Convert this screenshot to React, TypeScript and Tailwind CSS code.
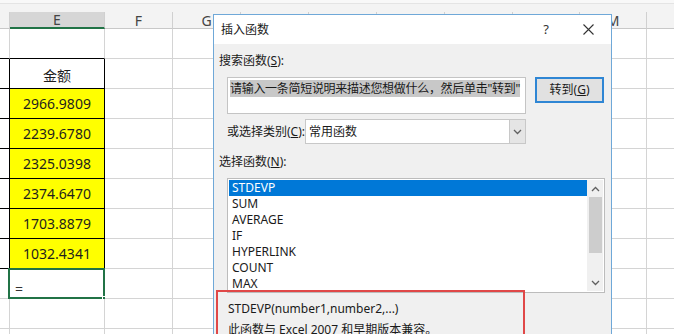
import React from 'react';

// ダイアログに隠れる列見出しは空にしておく
const COLS = [
  { key: 'D', w: 'w-[10px]', label: '' },
  { key: 'E', w: 'w-[95px]', label: 'E' },
  { key: 'F', w: 'w-[68px]', label: 'F' },
  { key: 'G', w: 'w-[68px]', label: 'G' },
  { key: 'H', w: 'w-[68px]', label: '' },
  { key: 'I', w: 'w-[68px]', label: '' },
  { key: 'J', w: 'w-[68px]', label: '' },
  { key: 'K', w: 'w-[68px]', label: '' },
  { key: 'L', w: 'w-[67px]', label: '' },
  { key: 'M', w: 'w-[67px]', label: 'M' },
  { key: 'N', w: 'w-[68px]', label: '' },
];

const AMOUNTS = ['2966.9809', '2239.6780', '2325.0398', '2374.6470', '1703.8879', '1032.4341'];

const FUNCS = ['STDEVP', 'SUM', 'AVERAGE', 'IF', 'HYPERLINK', 'COUNT', 'MAX'];

// 表のセル（罫線つき）
const Cell: React.FC<{ row: number; col: number }> = ({ row, col }) => {
  const inTable = col <= 1 && row <= 7;
  const bottom = inTable ? 'border-b-black' : 'border-b-[#d4d4d4]';
  const right = col <= 1 && row >= 1 && row <= 7 ? 'border-r-black' : 'border-r-[#d4d4d4]';
  const yellow = col === 1 && row >= 2 && row <= 7;
  const w = COLS[col].w;

  let content: React.ReactNode = null;
  if (col === 1 && row === 1) content = <span className="pt-[3px]">金额</span>;
  if (yellow) content = AMOUNTS[row - 2];

  return (
    <div
      className={`relative shrink-0 h-[30px] border-b border-r ${w} ${bottom} ${right} ${
        yellow ? 'bg-[#ffff00]' : 'bg-white'
      } flex items-center justify-center text-[14px] text-[#1e1e1e]`}
    >
      {content}
      {col === 1 && row === 8 && (
        <>
          <div className="absolute -top-px -left-[2px] -right-px -bottom-px border-2 border-[#217346]" />
          <span className="absolute left-[5px] bottom-[2px] text-[14px] leading-none text-[#333]">=</span>
          <div className="absolute -right-[3px] -bottom-[3px] w-[5px] h-[5px] bg-[#217346] border border-white" />
        </>
      )}
    </div>
  );
};

const Sheet: React.FC = () => (
  <div className="flex flex-col">
    <div className="h-[4px] bg-[#f8f8f8] border-b border-[#e4e4e4]" />
    <div className="h-[8px] bg-[#f3f3f3]" />
    <div className="flex h-[17px] bg-[#f3f3f3]">
      {COLS.map((c) => (
        <div
          key={c.key}
          className={`shrink-0 ${c.w} border-r border-[#d0d0d0] flex items-center justify-center text-[14px] text-[#444] ${
            c.key === 'E' ? 'bg-[#d6d6d6] border-b-2 border-b-[#217346]' : 'border-b border-b-[#c8c8c8]'
          }`}
        >
          {c.label}
        </div>
      ))}
    </div>
    {Array.from({ length: 11 }).map((_, r) => (
      <div key={r} className="flex">
        {COLS.map((c, ci) => (
          <Cell key={c.key} row={r} col={ci} />
        ))}
      </div>
    ))}
  </div>
);

const Chevron: React.FC<{ up?: boolean; className?: string }> = ({ up, className }) => (
  <svg width="9" height="6" viewBox="0 0 9 6" className={className}>
    <path
      d={up ? 'M1 5 L4.5 1.5 L8 5' : 'M1 1 L4.5 4.5 L8 1'}
      fill="none"
      stroke="currentColor"
      strokeWidth="1.3"
    />
  </svg>
);

const Dialog: React.FC = () => (
  <div className="absolute left-[213px] top-[14px] w-[399px] h-[340px] border border-[#6fa8d8] bg-[#f0f0f0] flex flex-col text-[12px] text-[#1a1a1a]">
    {/* タイトルバー */}
    <div className="h-[29px] bg-white flex items-center pl-[7px] shrink-0">
      <span>插入函数</span>
      <span className="ml-auto mr-[34px] text-[13px] text-[#333]">?</span>
      <svg width="11" height="11" viewBox="0 0 11 11" className="mr-[17px] text-[#333]">
        <path d="M0.5 0.5 L10.5 10.5 M10.5 0.5 L0.5 10.5" stroke="currentColor" strokeWidth="1.1" />
      </svg>
    </div>

    <div className="flex flex-col pl-[5px] whitespace-nowrap">
      <div className="mt-[9px] leading-[16px]">
        搜索函数(<u>S</u>):
      </div>

      <div className="flex mt-[8px] ml-[8px]">
        <div className="w-[299px] h-[37px] bg-white border border-[#c4c4c4] pl-[2px] pt-[3px] leading-[16px] overflow-hidden">
          <span className="bg-[#c8c8c8] tracking-[-0.3px]">请输入一条简短说明来描述您想做什么，然后单击"转到"</span>
        </div>
        <div className="ml-[9px] w-[69px] h-[26px] bg-[#e1e1e1] border-2 border-[#2f86d4] flex items-center justify-center">
          转到(<u>G</u>)
        </div>
      </div>

      <div className="flex items-center mt-[5px] ml-[8px]">
        <span className="w-[78px] pt-[1px]">
          或选择类别(<u>C</u>):
        </span>
        <div className="w-[221px] h-[25px] bg-white border border-[#c8c8c8] flex items-center">
          <span className="pl-[3px]">常用函数</span>
          <div className="ml-auto w-[16px] h-full bg-[#e5e5e5] border-l border-[#c8c8c8] flex items-center justify-center text-[#606060]">
            <Chevron />
          </div>
        </div>
      </div>

      <div className="mt-[10px] leading-[16px]">
        选择函数(<u>N</u>):
      </div>

      <div className="mt-[8px] ml-[8px] w-[378px] h-[115px] bg-white border border-[#bcbcbc] flex p-px">
        <div className="flex-1 flex flex-col">
          {FUNCS.map((f, i) => (
            <div
              key={f}
              className={`h-[16px] leading-[16px] pl-[3px] ${i === 0 ? 'bg-[#0078d7] text-white' : ''}`}
            >
              {f}
            </div>
          ))}
        </div>
        <div className="w-[16px] bg-[#f0f0f0] flex flex-col items-center">
          <div className="h-[17px] flex items-center justify-center text-[#606060]">
            <Chevron up />
          </div>
          <div className="w-[13px] h-[56px] bg-[#cdcdcd]" />
          <div className="mt-auto h-[17px] flex items-center justify-center text-[#606060]">
            <Chevron />
          </div>
        </div>
      </div>

      <div className="mt-[5px] ml-[9px] leading-[21px]">
        <div>STDEVP(number1,number2,...)</div>
        <div>此函数与 Excel 2007 和早期版本兼容。</div>
      </div>
    </div>

    {/* 注釈の赤枠 */}
    <div className="absolute left-[2px] top-[275px] w-[309px] h-[70px] border-2 border-[#e04848]" />
  </div>
);

export default function App() {
  return (
    <div
      className="relative w-[674px] h-[334px] overflow-hidden bg-white"
      style={{ fontFamily: '"Noto Sans", "Noto Sans CJK SC", sans-serif' }}
    >
      <Sheet />
      <Dialog />
    </div>
  );
}
